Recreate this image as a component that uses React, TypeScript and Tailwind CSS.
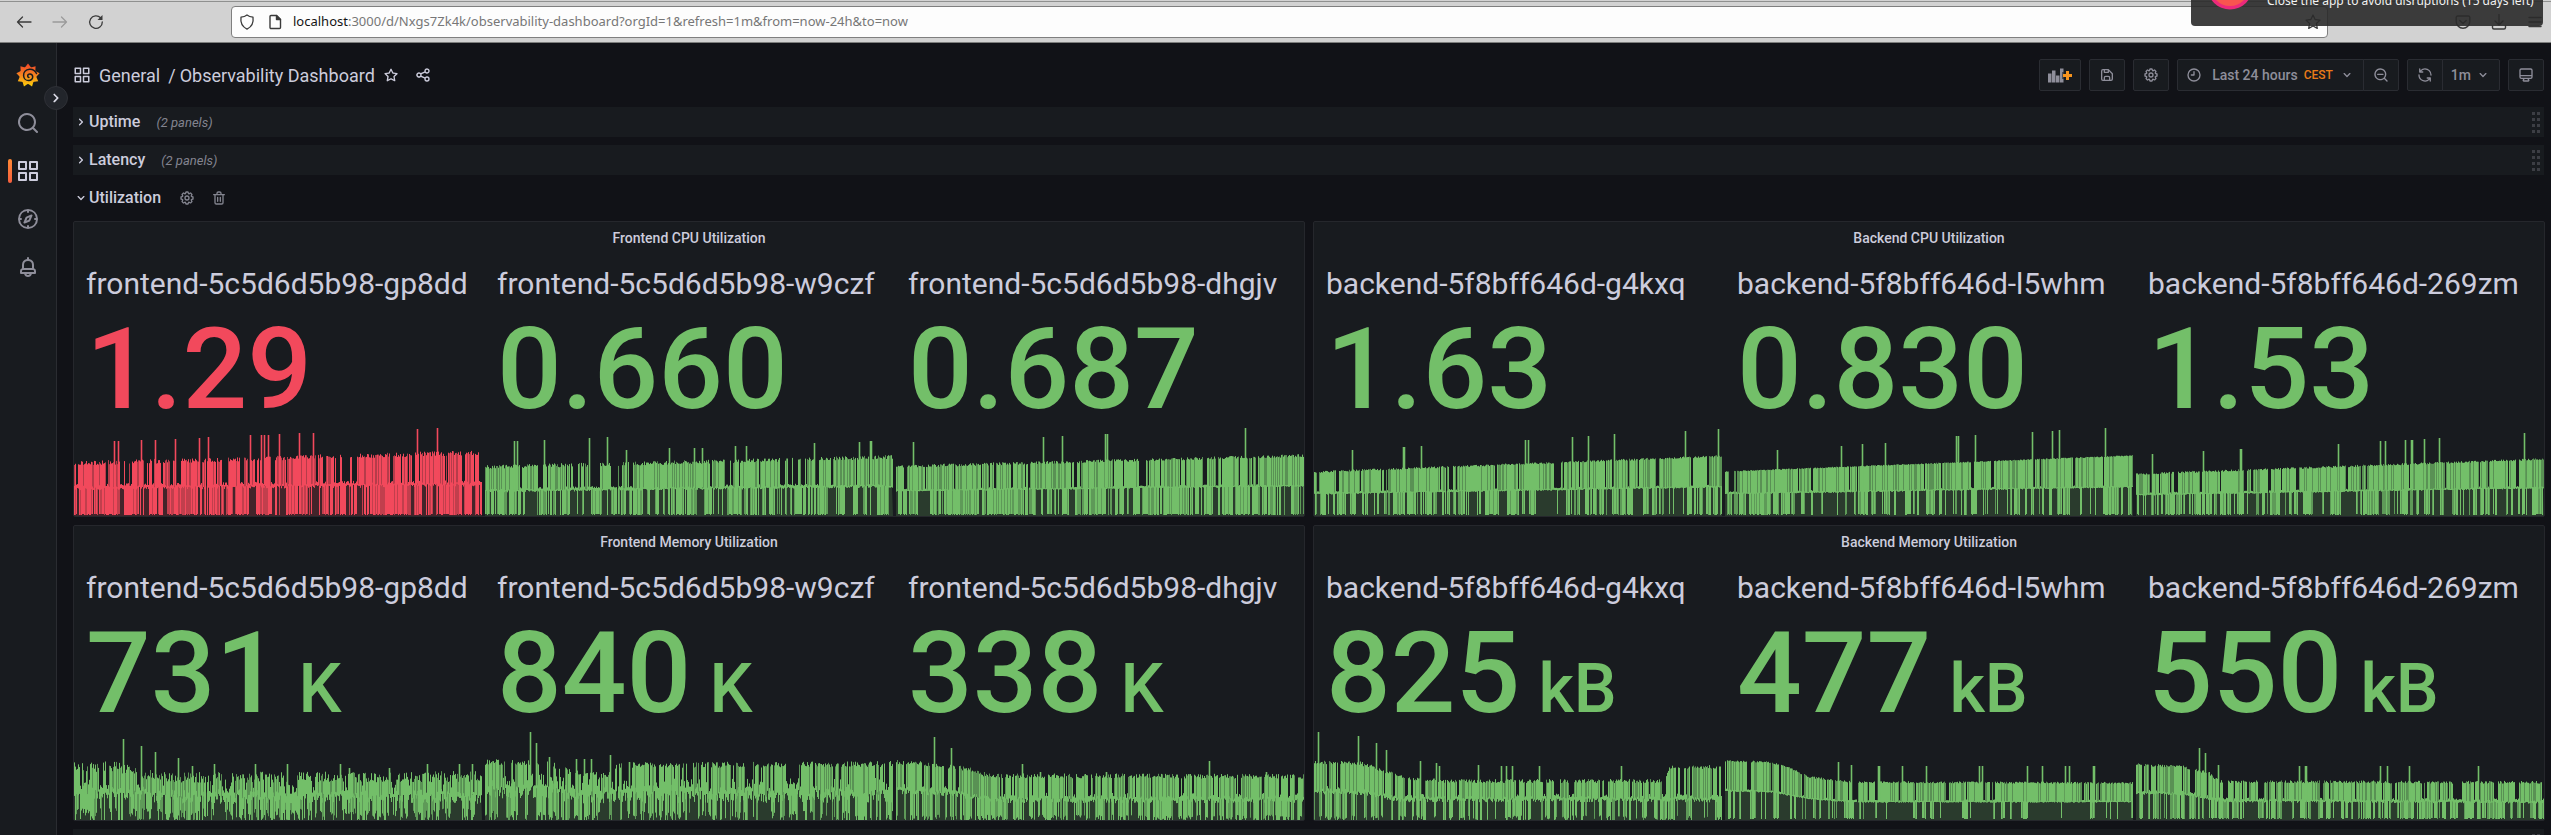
import type { ReactNode } from 'react';

const ICONS = {
  apps: 'M10,13H3a1,1,0,0,0-1,1v7a1,1,0,0,0,1,1h7a1,1,0,0,0,1-1V14A1,1,0,0,0,10,13ZM9,20H4V15H9ZM21,2H14a1,1,0,0,0-1,1v7a1,1,0,0,0,1,1h7a1,1,0,0,0,1-1V3A1,1,0,0,0,21,2ZM20,9H15V4h5Zm1,4H14a1,1,0,0,0-1,1v7a1,1,0,0,0,1,1h7a1,1,0,0,0,1-1V14A1,1,0,0,0,21,13Zm-1,7H15V15h5ZM10,2H3A1,1,0,0,0,2,3v7a1,1,0,0,0,1,1h7a1,1,0,0,0,1-1V3A1,1,0,0,0,10,2ZM9,9H4V4H9Z',
  search: 'M21.71,20.29,18,16.61A9,9,0,1,0,16.61,18l3.68,3.68a1,1,0,0,0,1.42,0A1,1,0,0,0,21.71,20.29ZM11,18a7,7,0,1,1,7-7A7,7,0,0,1,11,18Z',
  searchMinus: 'M21.71,20.29,18,16.61A9,9,0,1,0,16.61,18l3.68,3.68a1,1,0,0,0,1.42,0A1,1,0,0,0,21.71,20.29ZM11,18a7,7,0,1,1,7-7A7,7,0,0,1,11,18Zm4-8H7a1,1,0,0,0,0,2h8a1,1,0,0,0,0-2Z',
  compass: 'M12,2A10,10,0,1,0,22,12,10,10,0,0,0,12,2Zm1,17.93V19a1,1,0,0,0-2,0v.93A8,8,0,0,1,4.07,13H5a1,1,0,0,0,0-2H4.07A8,8,0,0,1,11,4.07V5a1,1,0,0,0,2,0V4.07A8,8,0,0,1,19.93,11H19a1,1,0,0,0,0,2h.93A8,8,0,0,1,13,19.93ZM15.14,7.55l-5,2.12a1,1,0,0,0-.52.52l-2.12,5a1,1,0,0,0,.21,1.1,1,1,0,0,0,.7.3.93.93,0,0,0,.4-.09l5-2.12a1,1,0,0,0,.52-.52l2.12-5a1,1,0,0,0-1.31-1.31Zm-2.49,5.1-2.28,1,1-2.28,2.28-1Z',
  bell: 'M18,13.18V10a6,6,0,0,0-5-5.91V3a1,1,0,0,0-2,0V4.09A6,6,0,0,0,6,10v3.18A3,3,0,0,0,4,16v2a1,1,0,0,0,1,1H8.14a4,4,0,0,0,7.72,0H19a1,1,0,0,0,1-1V16A3,3,0,0,0,18,13.18ZM8,10a4,4,0,0,1,8,0v3H8Zm4,10a2,2,0,0,1-1.72-1h3.44A2,2,0,0,1,12,20Zm6-3H6V16a1,1,0,0,1,1-1H17a1,1,0,0,1,1,1Z',
  star: 'M22,9.67A1,1,0,0,0,21.14,9l-5.69-.83L12.9,3a1,1,0,0,0-1.8,0L8.55,8.16,2.86,9a1,1,0,0,0-.81.68,1,1,0,0,0,.25,1l4.13,4-1,5.68A1,1,0,0,0,6.9,21.44L12,18.77l5.1,2.67a.93.93,0,0,0,.46.12,1,1,0,0,0,.59-.19,1,1,0,0,0,.4-1l-1-5.68,4.13-4A1,1,0,0,0,22,9.67Zm-6.15,4a1,1,0,0,0-.29.88l.72,4.2-3.76-2a1.06,1.06,0,0,0-.94,0l-3.76,2,.72-4.2a1,1,0,0,0-.29-.88l-3-3,4.21-.61a1,1,0,0,0,.76-.55L12,5.7l1.88,3.82a1,1,0,0,0,.76.55l4.21.61Z',
  share: 'M18,14a4,4,0,0,0-3.08,1.48l-5.1-2.35a3.64,3.64,0,0,0,0-2.26l5.1-2.35A4,4,0,1,0,14,6a4.17,4.17,0,0,0,.07.71L8.79,9.14a4,4,0,1,0,0,5.72l5.28,2.43A4.17,4.17,0,0,0,14,18a4,4,0,1,0,4-4ZM18,4a2,2,0,1,1-2,2A2,2,0,0,1,18,4ZM6,14a2,2,0,1,1,2-2A2,2,0,0,1,6,14Zm12,6a2,2,0,1,1,2-2A2,2,0,0,1,18,20Z',
  save: 'M20.71,9.29l-6-6a1,1,0,0,0-.32-.21A1.09,1.09,0,0,0,14,3H6A3,3,0,0,0,3,6V18a3,3,0,0,0,3,3H18a3,3,0,0,0,3-3V10A1,1,0,0,0,20.71,9.29ZM9,5h4V7H9Zm6,14H9V16a1,1,0,0,1,1-1h4a1,1,0,0,1,1,1Zm4-1a1,1,0,0,1-1,1H17V16a3,3,0,0,0-3-3H10a3,3,0,0,0-3,3v3H6a1,1,0,0,1-1-1V6A1,1,0,0,1,6,5H7V8A1,1,0,0,0,8,9h6a1,1,0,0,0,1-1V6.41l4,4Z',
  cog: 'M21.32,9.55l-1.89-.63.89-1.78A1,1,0,0,0,20.13,6L18,3.87a1,1,0,0,0-1.15-.19l-1.78.89-.63-1.89A1,1,0,0,0,13.5,2h-3a1,1,0,0,0-.95.68L8.92,4.57,7.14,3.68A1,1,0,0,0,6,3.87L3.87,6a1,1,0,0,0-.19,1.15l.89,1.78-1.89.63A1,1,0,0,0,2,10.5v3a1,1,0,0,0,.68.95l1.89.63-.89,1.78A1,1,0,0,0,3.87,18L6,20.13a1,1,0,0,0,1.15.19l1.78-.89.63,1.89a1,1,0,0,0,.95.68h3a1,1,0,0,0,.95-.68l.63-1.89,1.78.89A1,1,0,0,0,18,20.13L20.13,18a1,1,0,0,0,.19-1.15l-.89-1.78,1.89-.63A1,1,0,0,0,22,13.5v-3A1,1,0,0,0,21.32,9.55ZM20,12.78l-1.2.4A2,2,0,0,0,17.64,16l.57,1.14-1.1,1.1L16,17.64a2,2,0,0,0-2.79,1.16l-.4,1.2H11.22l-.4-1.2A2,2,0,0,0,8,17.64l-1.14.57-1.1-1.1L6.36,16A2,2,0,0,0,5.2,13.18L4,12.78V11.22l1.2-.4A2,2,0,0,0,6.36,8L5.79,6.89l1.1-1.1L8,6.36A2,2,0,0,0,10.82,5.2l.4-1.2h1.56l.4,1.2A2,2,0,0,0,16,6.36l1.14-.57,1.1,1.1L17.64,8a2,2,0,0,0,1.16,2.79l1.2.4ZM12,8a4,4,0,1,0,4,4A4,4,0,0,0,12,8Zm0,6a2,2,0,1,1,2-2A2,2,0,0,1,12,14Z',
  clock: 'M12,2A10,10,0,1,0,22,12,10,10,0,0,0,12,2Zm0,18a8,8,0,1,1,8-8A8,8,0,0,1,12,20ZM12,6a1,1,0,0,0-1,1v4H8a1,1,0,0,0,0,2h4a1,1,0,0,0,1-1V7A1,1,0,0,0,12,6Z',
  sync: 'M19.91,15.51H15.38a1,1,0,0,0,0,2h2.4A8,8,0,0,1,4,12a1,1,0,0,0-2,0,10,10,0,0,0,16.88,7.23V21a1,1,0,0,0,2,0V16.5A1,1,0,0,0,19.91,15.51ZM12,2A10,10,0,0,0,5.12,4.77V3a1,1,0,0,0-2,0V7.5a1,1,0,0,0,1,1h4.5a1,1,0,0,0,0-2H6.22A8,8,0,0,1,20,12a1,1,0,0,0,2,0A10,10,0,0,0,12,2Z',
  monitor: 'M19,2H5A3,3,0,0,0,2,5V15a3,3,0,0,0,3,3H7.64l-.58,1a2,2,0,0,0,0,2,2,2,0,0,0,1.75,1h6.46A2,2,0,0,0,17,21a2,2,0,0,0,0-2l-.59-1H19a3,3,0,0,0,3-3V5A3,3,0,0,0,19,2ZM8.77,20,10,18H14l1.2,2ZM20,15a1,1,0,0,1-1,1H5a1,1,0,0,1-1-1V14H20Zm0-3H4V5A1,1,0,0,1,5,4H19a1,1,0,0,1,1,1Z',
  trash: 'M10,18a1,1,0,0,0,1-1V11a1,1,0,0,0-2,0v6A1,1,0,0,0,10,18ZM20,6H16V5a3,3,0,0,0-3-3H11A3,3,0,0,0,8,5V6H4A1,1,0,0,0,4,8H5V19a3,3,0,0,0,3,3h8a3,3,0,0,0,3-3V8h1a1,1,0,0,0,0-2ZM10,5a1,1,0,0,1,1-1h2a1,1,0,0,1,1,1V6H10Zm7,14a1,1,0,0,1-1,1H8a1,1,0,0,1-1-1V8H17Zm-3-1a1,1,0,0,0,1-1V11a1,1,0,0,0-2,0v6A1,1,0,0,0,14,18Z',
  angleRight: 'M14.83,11.29,10.59,7.05a1,1,0,0,0-1.42,0,1,1,0,0,0,0,1.41L12.71,12,9.17,15.54a1,1,0,0,0,0,1.41,1,1,0,0,0,.71.29,1,1,0,0,0,.71-.29l4.24-4.24A1,1,0,0,0,14.83,11.29Z',
  angleDown: 'M17,9.17a1,1,0,0,0-1.41,0L12,12.71,8.46,9.17a1,1,0,0,0-1.41,0,1,1,0,0,0,0,1.42l4.24,4.24a1,1,0,0,0,1.42,0L17,10.59A1,1,0,0,0,17,9.17Z',
};

function Icon({ name, className = 'size-4' }: { name: keyof typeof ICONS; className?: string }) {
  return (
    <svg viewBox="0 0 24 24" fill="currentColor" aria-hidden="true" className={`shrink-0 ${className}`}>
      <path d={ICONS[name]} />
    </svg>
  );
}

/* ---------- sparkline ---------- */

type Stop = [x: number, y: number];

interface Series {
  seed: number;
  top: Stop[];
  mid: Stop[];
  topJitter: number;
  midJitter: number;
  up: number;
  low: number;
  ragged?: number;
  spikes: Stop[];
}

const CHART_W = 408;
const CHART_H = 89;

function random(seed: number) {
  let s = seed * 2654435761;
  return () => {
    s = (s + 0x6d2b79f5) | 0;
    let t = Math.imul(s ^ (s >>> 15), 1 | s);
    t = (t + Math.imul(t ^ (t >>> 7), 61 | t)) ^ t;
    return ((t ^ (t >>> 14)) >>> 0) / 4294967296;
  };
}

function at(stops: Stop[], x: number) {
  for (let i = 1; i < stops.length; i++) {
    const [x0, y0] = stops[i - 1];
    const [x1, y1] = stops[i];
    if (x <= x1) return y0 + ((y1 - y0) * (x - x0)) / (x1 - x0);
  }
  return stops[stops.length - 1][1];
}

function buildPaths(s: Series) {
  const rnd = random(s.seed);
  let strong = '';
  let soft = '';
  let peaks = '';
  let area = `M0 ${CHART_H}`;
  let up = true;
  let low = false;
  for (let x = 0; x < CHART_W; x++) {
    if (rnd() < 0.5) up = rnd() < s.up;
    if (rnd() < 0.55) low = rnd() < s.low;
    const mid = at(s.mid, x) + (rnd() - 0.5) * s.midJitter;
    const top = at(s.top, x) - rnd() * s.topJitter;
    const bottom = s.ragged ? Math.max(0, (rnd() - 0.35) * s.ragged) : rnd() < 0.5 ? 1 : 2;
    area += `L${x} ${(CHART_H - mid).toFixed(1)}`;
    if (x === 132) continue;
    const thick = 0.7 + s.midJitter / 2.5;
    const hi = up ? top : mid + thick;
    const lo = low ? bottom : mid - thick;
    const cx = x + 0.5;
    const upper = `M${cx} ${(CHART_H - mid + thick).toFixed(1)}V${(CHART_H - hi).toFixed(1)}`;
    const lower = `M${cx} ${(CHART_H - mid).toFixed(1)}V${(CHART_H - lo).toFixed(1)}`;
    if (!up || rnd() < 0.68) strong += upper;
    else soft += upper;
    if (rnd() < 0.66) strong += lower;
    else soft += lower;
  }
  for (const [x, y] of s.spikes) {
    peaks += `M${x + 0.5} ${(CHART_H - at(s.mid, x)).toFixed(1)}V${CHART_H - y}`;
  }
  area += `L${CHART_W} ${CHART_H}Z`;
  return { strong, soft, peaks, area };
}

function Sparkline({ series }: { series: Series }) {
  const { strong, soft, peaks, area } = buildPaths(series);
  return (
    <svg
      viewBox={`0 0 ${CHART_W} ${CHART_H}`}
      preserveAspectRatio="none"
      aria-hidden="true"
      className="block h-[89px] w-full"
    >
      <path d={area} fill="currentColor" opacity="0.2" />
      <path d={soft} stroke="currentColor" strokeWidth="1" opacity="0.72" fill="none" />
      <path d={strong} stroke="currentColor" strokeWidth="1" fill="none" />
      <path d={peaks} stroke="currentColor" strokeWidth="1.6" fill="none" />
    </svg>
  );
}

/* ---------- data ---------- */

interface Stat {
  label: string;
  value: string;
  unit?: string;
  alert?: boolean;
  series: Series;
}

const at54 = (xs: number[]): Stop[] => xs.map((x) => [x, 54]);

const PANELS: { title: string; stats: Stat[] }[] = [
  {
    title: 'Frontend CPU Utilization',
    stats: [
      {
        label: 'frontend-5c5d6d5b98-gp8dd',
        value: '1.29',
        alert: true,
        series: {
          seed: 11, top: [[0, 55], [408, 66]], mid: [[0, 29], [408, 33]], topJitter: 5, midJitter: 3, up: 0.8, low: 0.74,
          spikes: [[40, 75], [44, 75], [67, 76], [81, 76], [101, 77], [125, 78], [134, 79], [176, 81], [187, 81], [190, 81], [194, 81], [205, 82], [225, 83], [239, 83], [343, 87], [363, 88]],
        },
      },
      {
        label: 'frontend-5c5d6d5b98-w9czf',
        value: '0.660',
        series: {
          seed: 12, top: [[0, 51], [130, 54], [408, 61]], mid: [[0, 26], [408, 31]], topJitter: 4, midJitter: 2, up: 0.84, low: 0.64,
          spikes: [[29, 75], [32, 75], [59, 76], [104, 78], [122, 79], [141, 66], [184, 68], [209, 68], [217, 68], [250, 70], [261, 70], [329, 73], [374, 74], [385, 75], [386, 75]],
        },
      },
      {
        label: 'frontend-5c5d6d5b98-dhgjv',
        value: '0.687',
        series: {
          seed: 13, top: [[0, 51], [408, 62]], mid: [[0, 26], [408, 31]], topJitter: 3, midJitter: 1, up: 0.86, low: 0.75,
          spikes: [[17, 74], [147, 79], [166, 80], [209, 82], [211, 82], [349, 88]],
        },
      },
    ],
  },
  {
    title: 'Backend CPU Utilization',
    stats: [
      {
        label: 'backend-5f8bff646d-g4kxq',
        value: '1.63',
        series: {
          seed: 21, top: [[0, 45], [408, 61]], mid: [[0, 23], [408, 30]], topJitter: 2, midJitter: 1, up: 0.87, low: 0.56,
          spikes: [[38, 66], [89, 69], [90, 69], [107, 70], [211, 76], [214, 76], [258, 79], [274, 80], [300, 82], [371, 85], [404, 87]],
        },
      },
      {
        label: 'backend-5f8bff646d-l5whm',
        value: '0.830',
        series: {
          seed: 22, top: [[0, 45], [408, 61]], mid: [[0, 23], [408, 30]], topJitter: 1, midJitter: 1, up: 0.94, low: 0.5,
          spikes: [[52, 66], [116, 70], [137, 72], [160, 73], [231, 80], [233, 80], [250, 81], [307, 84], [327, 85], [334, 86], [380, 88]],
        },
      },
      {
        label: 'backend-5f8bff646d-269zm',
        value: '1.53',
        series: {
          seed: 23, top: [[0, 43], [408, 58]], mid: [[0, 22], [408, 29]], topJitter: 2, midJitter: 1, up: 0.9, low: 0.56,
          spikes: [[16, 62], [67, 65], [104, 67], [105, 67], [202, 72], [244, 75], [249, 75], [269, 76], [275, 76], [276, 76], [288, 77], [303, 78], [388, 83]],
        },
      },
    ],
  },
  {
    title: 'Frontend Memory Utilization',
    stats: [
      {
        label: 'frontend-5c5d6d5b98-gp8dd',
        value: '731',
        unit: 'K',
        series: {
          seed: 31, top: [[0, 60], [45, 58], [70, 52], [86, 48], [408, 49]], mid: [[0, 31], [70, 29], [86, 26], [408, 26]], topJitter: 11, midJitter: 10, up: 0.82, low: 0.74, ragged: 18,
          spikes: [[49, 81], [67, 74], [81, 68], [104, 62], [118, 54], [140, 56], [181, 56], [213, 56], [266, 56], [275, 52], [315, 52], [353, 56], [385, 56], [398, 56]],
        },
      },
      {
        label: 'frontend-5c5d6d5b98-w9czf',
        value: '840',
        unit: 'K',
        series: {
          seed: 32, top: [[0, 61], [60, 61], [85, 51], [120, 47], [133, 58], [408, 59]], mid: [[0, 34], [60, 34], [90, 28], [130, 29], [408, 30]], topJitter: 6, midJitter: 13, up: 0.68, low: 0.5, ragged: 14,
          spikes: [[45, 88], [51, 77], [64, 63], [91, 61], [99, 61], [106, 61], [125, 65], [144, 58]],
        },
      },
      {
        label: 'frontend-5c5d6d5b98-dhgjv',
        value: '338',
        unit: 'K',
        series: {
          seed: 33, top: [[0, 60], [22, 60], [80, 52], [90, 47], [408, 46]], mid: [[0, 31], [55, 29], [90, 22], [408, 22]], topJitter: 5, midJitter: 5, up: 0.82, low: 0.72, ragged: 8,
          spikes: [[38, 83], [55, 72], [126, 56], [144, 48], [210, 48], [313, 59], [370, 48]],
        },
      },
    ],
  },
  {
    title: 'Backend Memory Utilization',
    stats: [
      {
        label: 'backend-5f8bff646d-g4kxq',
        value: '825',
        unit: 'kB',
        series: {
          seed: 41, top: [[0, 60], [45, 59], [74, 50], [86, 45], [129, 41], [350, 41], [356, 55], [408, 55]], mid: [[0, 30], [50, 29], [84, 22], [408, 22]], topJitter: 4, midJitter: 4, up: 0.82, low: 0.48, ragged: 7,
          spikes: [[4, 88], [44, 84], [62, 77], [72, 70], [106, 59], [122, 57], [125, 54], [164, 55], [187, 54], [192, 54], [198, 54], [225, 54], [307, 54]],
        },
      },
      {
        label: 'backend-5f8bff646d-l5whm',
        value: '477',
        unit: 'kB',
        series: {
          seed: 42, top: [[0, 60], [42, 59], [63, 54], [83, 44], [126, 39], [408, 38]], mid: [[0, 30], [45, 29], [85, 22], [126, 19], [408, 19]], topJitter: 2, midJitter: 1, up: 0.89, low: 0.24,
          spikes: [[113, 58], [126, 55], [153, 54], [154, 54], ...at54([177, 201, 254, 257, 302, 317, 340, 344, 368, 369])],
        },
      },
      {
        label: 'backend-5f8bff646d-269zm',
        value: '550',
        unit: 'kB',
        series: {
          seed: 43, top: [[0, 57], [46, 55], [73, 48], [83, 40], [408, 39]], mid: [[0, 28], [50, 27], [85, 20], [408, 19]], topJitter: 3, midJitter: 2, up: 0.8, low: 0.55,
          spikes: [[63, 72], [69, 67], [82, 55], ...at54([163, 169, 170, 244, 251, 273, 342])],
        },
      },
    ],
  },
];

/* ---------- browser chrome ---------- */

function BrowserBar() {
  return (
    <div className="relative flex h-[43px] shrink-0 items-center border-b border-[#7d7e7d] bg-[#d2d2d2] pt-0.5 font-['Noto_Sans',sans-serif] text-[#3b3b3b]">
      <div className="absolute inset-x-0 top-px h-px bg-[#8f908f]" />
      <div className="flex w-[231px] shrink-0 items-center gap-5 pl-4">
        <button type="button" aria-label="Back">
          <svg viewBox="0 0 16 16" fill="none" stroke="currentColor" strokeWidth="1.3" strokeLinecap="round" strokeLinejoin="round" className="size-4">
            <path d="M15 8H1.5M6.5 3L1.5 8l5 5" />
          </svg>
        </button>
        <button type="button" aria-label="Forward" className="text-[#9b9b9b]">
          <svg viewBox="0 0 16 16" fill="none" stroke="currentColor" strokeWidth="1.3" strokeLinecap="round" strokeLinejoin="round" className="size-4">
            <path d="M1 8h13.500M9.500 3l5 5-5 5" />
          </svg>
        </button>
        <button type="button" aria-label="Reload">
          <svg viewBox="0 0 16 16" fill="none" stroke="currentColor" strokeWidth="1.3" strokeLinecap="round" strokeLinejoin="round" className="size-4">
            <path d="M12.600 3.800A6.300 6.300 0 1 0 14.300 8" />
            <path d="M14.500 1v5h-5z" fill="currentColor" stroke="none" />
          </svg>
        </button>
      </div>
      <div className="flex h-8 grow items-center rounded-[4px] border border-[#7f7f7f] bg-[#fdfdfd] pr-1.5 pl-[7px] text-[13px]">
        <svg viewBox="0 0 16 16" fill="none" stroke="currentColor" strokeWidth="1.300" strokeLinejoin="round" className="size-4 shrink-0">
          <path d="M8 1c1.900 1.500 3.900 2 6 2.200.700 5-1.200 9.600-6 12-4.800-2.400-6.700-7-6-12C4.100 3 6.100 2.500 8 1z" />
        </svg>
        <svg viewBox="0 0 16 16" fill="none" stroke="currentColor" strokeWidth="1.400" strokeLinejoin="round" className="ml-3 size-4 shrink-0">
          <path d="M4 1.500h5.500L13.500 5.500v8a1 1 0 0 1-1 1h-8.500a1 1 0 0 1-1-1v-11a1 1 0 0 1 1-1z" />
          <path d="M9.500 1.500v4h4z" fill="currentColor" />
        </svg>
        <div className="relative ml-2.5 h-full grow">
          <input
            aria-label="Address"
            readOnly
            defaultValue="localhost:3000/d/Nxgs7Zk4k/observability-dashboard?orgId=1&refresh=1m&from=now-24h&to=now"
            className="h-full w-full bg-transparent text-transparent outline-none"
          />
          <div aria-hidden="true" className="pointer-events-none absolute inset-0 flex items-center text-[#777777]">
            <span className="text-[#141414]">localhost</span>:3000/d/Nxgs7Zk4k/observability-dashboard?orgId=1&amp;refresh=1m&amp;from=now-24h&amp;to=now
          </div>
        </div>
        <button type="button" aria-label="Bookmark this page">
          <svg viewBox="0 0 16 16" fill="none" stroke="currentColor" strokeWidth="1.300" strokeLinejoin="round" className="size-4">
            <path d="M8 1l2.100 4.500 4.900.600-3.600 3.400.9 4.900L8 12l-4.300 2.400.900-4.900L1 6.100l4.900-.600z" />
          </svg>
        </button>
      </div>
      <div className="flex w-[223px] shrink-0 items-center justify-end gap-5 pr-2">
        <svg viewBox="0 0 16 16" fill="none" stroke="currentColor" strokeWidth="1.400" strokeLinecap="round" strokeLinejoin="round" className="size-4">
          <path d="M2.500 2h11a1.300 1.300 0 0 1 1.300 1.300v4.200a6.800 6.800 0 0 1-13.600 0V3.300A1.300 1.300 0 0 1 2.500 2zM4.800 6.500L8 9.500l3.200-3" />
        </svg>
        <svg viewBox="0 0 16 16" fill="none" stroke="currentColor" strokeWidth="1.400" strokeLinecap="round" strokeLinejoin="round" className="size-4">
          <path d="M8 .5v10M4 7l4 4 4-4M1.500 12v1.500a1.500 1.500 0 0 0 1.500 1.500h10a1.500 1.500 0 0 0 1.500-1.500V12" />
        </svg>
        <svg viewBox="0 0 16 16" stroke="currentColor" strokeWidth="1.400" strokeLinecap="round" className="size-4">
          <path d="M2 3.500h12M2 8h12M2 12.500h12" />
        </svg>
      </div>
      <Toast />
    </div>
  );
}

function Toast() {
  return (
    <div className="absolute top-0 right-2 z-10 flex h-[26px] w-[352px] overflow-hidden rounded-b-[4px] bg-[#2a2a2a]/90 pl-4">
      <svg viewBox="0 0 46 46" aria-hidden="true" className="-mt-9 size-[46px] shrink-0">
        <circle cx="23" cy="23" r="22.500" fill="#ec2a7b" />
        <ellipse cx="23" cy="21" rx="20" ry="21" fill="#f8554f" />
      </svg>
      <p className="-mt-2 ml-3.5 text-[12px] leading-[18px] whitespace-nowrap text-[#f2f2f2]">
        Close the app to avoid disruptions (15 days left)
      </p>
    </div>
  );
}

/* ---------- navigation ---------- */

function GrafanaLogo() {
  const teeth = Array.from({ length: 9 }, (_, i) => {
    const a = (i / 9) * Math.PI * 2 - Math.PI / 2;
    const p = (r: number, d: number) => `${(12 + r * Math.cos(a + d)).toFixed(2)} ${(12.3 + r * Math.sin(a + d)).toFixed(2)}`;
    return `${i ? 'L' : 'M'}${p(9, -0.26)}L${p(11.8, 0)}L${p(9, 0.26)}Q${p(8.2, 0.35)} ${p(9, 0.44)}`;
  }).join('');
  return (
    <svg viewBox="0 0 24 24" aria-hidden="true" className="size-6">
      <defs>
        <linearGradient id="flame" x1="0" y1="0" x2="0" y2="1">
          <stop offset="0" stopColor="#f0452a" />
          <stop offset="0.5" stopColor="#f58220" />
          <stop offset="1" stopColor="#fcd00a" />
        </linearGradient>
      </defs>
      <path d={`${teeth}Z`} fill="url(#flame)" />
      <path
        d="M20.500 10.500C19 7.300 16.300 6 13.500 6.200 9.700 6.500 7.400 9.400 7.600 12.700c.2 3 2.500 5 5.200 4.900 2.300-.1 4-1.800 3.900-3.900-.1-1.700-1.300-2.800-2.800-2.800-1.300 0-2.200.900-2.200 2 0 .8.500 1.400 1.200 1.500"
        fill="none"
        stroke="#181b1f"
        strokeWidth="1.500"
        strokeLinecap="round"
      />
    </svg>
  );
}

function NavItem({ label, active, children }: { label: string; active?: boolean; children: ReactNode }) {
  return (
    <a
      href="#"
      aria-label={label}
      className={`relative flex h-12 items-center justify-center ${active ? 'text-[#ccccdc]' : 'text-[#8e8e9a]'}`}
    >
      {active && <span className="absolute left-2 h-6 w-1 rounded-[2px] bg-linear-to-b from-[#ff8833] to-[#f55f3e]" />}
      {children}
    </a>
  );
}

function Sidebar() {
  return (
    <nav className="relative w-[57px] shrink-0 border-r border-[#2a2c31] bg-[#181b1f] pt-2">
      <NavItem label="Home"><GrafanaLogo /></NavItem>
      <NavItem label="Search"><Icon name="search" className="size-6" /></NavItem>
      <NavItem label="Dashboards" active><Icon name="apps" className="size-6" /></NavItem>
      <NavItem label="Explore"><Icon name="compass" className="size-6" /></NavItem>
      <NavItem label="Alerting"><Icon name="bell" className="size-6" /></NavItem>
      <button
        type="button"
        aria-label="Expand menu"
        className="absolute top-[43px] -right-3 z-10 flex size-6 items-center justify-center rounded-full border border-[#2e3036] bg-[#22252b] text-[#dcdce8]"
      >
        <Icon name="angleRight" className="size-5" />
      </button>
    </nav>
  );
}

/* ---------- dashboard ---------- */

const BTN = 'flex h-8 items-center justify-center border border-[#2a2c32] bg-[#181b1f] text-[#8e8e9a]';

function Toolbar() {
  return (
    <header className="flex h-16 items-center text-[18px] text-[#ccccdc]">
      <Icon name="apps" className="mr-2 size-[18px]" />
      <a href="#">General</a>
      <span className="mr-1 ml-2">/</span>
      <a href="#">Observability Dashboard</a>
      <button type="button" aria-label="Mark as favorite" className="ml-2"><Icon name="star" /></button>
      <button type="button" aria-label="Share dashboard" className="ml-4"><Icon name="share" /></button>
      <div className="ml-auto flex gap-2 pr-px text-[14px] font-medium">
        <button type="button" aria-label="Add panel" className={`${BTN} w-[42px] rounded-[2px]`}>
          <svg viewBox="0 0 24 16" className="h-4 w-6">
            <path d="M0 6h3.500v9H0zM4 3h3.500v12H4zM8 8h3.500v7H8zM12 1h3.500v14H12z" fill="#8e8e9a" transform="translate(0 .5)" />
            <path d="M14 5h9v7h-9z" fill="#181b1f" opacity=".55" />
            <path d="M18 4h3v3h3v3h-3v3h-3v-3h-3V7h3z" fill="#f7941e" />
          </svg>
        </button>
        <button type="button" aria-label="Save dashboard" className={`${BTN} w-9 rounded-[2px]`}><Icon name="save" /></button>
        <button type="button" aria-label="Dashboard settings" className={`${BTN} w-9 rounded-[2px]`}><Icon name="cog" /></button>
        <div className="flex">
          <button type="button" className={`${BTN} rounded-l-[2px] px-2`}>
            <Icon name="clock" />
            <span className="ml-2.5">Last 24 hours</span>
            <span className="mx-1.5 text-[12px] text-[#eb7b18]">CEST</span>
            <Icon name="angleDown" />
          </button>
          <button type="button" aria-label="Zoom out" className={`${BTN} -ml-px w-9 rounded-r-[2px]`}><Icon name="searchMinus" /></button>
        </div>
        <div className="flex">
          <button type="button" aria-label="Refresh" className={`${BTN} w-9 rounded-l-[2px]`}><Icon name="sync" /></button>
          <button type="button" className={`${BTN} -ml-px gap-1 rounded-r-[2px] px-2`}>
            1m
            <Icon name="angleDown" />
          </button>
        </div>
        <button type="button" aria-label="Cycle view mode" className={`${BTN} w-9 rounded-[2px]`}><Icon name="monitor" /></button>
      </div>
    </header>
  );
}

function DragHandle() {
  return (
    <svg viewBox="0 0 8 21" fill="#3c3e44" aria-hidden="true" className="mr-1 ml-auto h-[21px] w-2">
      {[0, 6, 12, 18].map((y) => (
        <path key={y} d={`M0 ${y}h3v3h-3zM5 ${y}h3v3h-3z`} />
      ))}
    </svg>
  );
}

function CollapsedRow({ title, count }: { title?: string; count?: string }) {
  return (
    <section className="mr-px flex h-[30px] shrink-0 items-center bg-[#181b1f]">
      {title && (
        <button type="button" className="flex items-center text-[16px] font-medium text-[#ccccdc]">
          <Icon name="angleRight" />
          {title}
          <span className="ml-4 pt-0.5 text-[13px] font-normal text-[#83848f] italic">{count}</span>
        </button>
      )}
      <DragHandle />
    </section>
  );
}

function StatItem({ stat }: { stat: Stat }) {
  return (
    <div className={`flex min-w-0 flex-col justify-between pt-3 ${stat.alert ? 'text-[#f2495c]' : 'text-[#73bf69]'}`}>
      <div className="px-3 whitespace-nowrap">
        <div className="text-[30px] leading-9 text-[#ccccdc]">{stat.label}</div>
        <div className="mt-2.5 text-[114px] leading-none font-medium">
          {stat.value}
          {stat.unit && <span className="ml-[18px] text-[68px] leading-none">{stat.unit}</span>}
        </div>
      </div>
      <Sparkline series={stat.series} />
    </div>
  );
}

function Panel({ title, stats }: { title: string; stats: Stat[] }) {
  return (
    <section className="flex h-[296px] min-w-0 flex-col overflow-hidden rounded-[2px] border border-[#25272c] bg-[#181b1f]">
      <h2 className="h-8 text-center text-[14px] leading-8 font-medium text-[#ccccdc]">{title}</h2>
      <div className="grid grow grid-cols-3 gap-[3px]">
        {stats.map((stat) => (
          <StatItem key={stat.label} stat={stat} />
        ))}
      </div>
    </section>
  );
}

export default function App() {
  return (
    <div className="flex h-screen flex-col overflow-hidden bg-[#111217] font-[Roboto,sans-serif]">
      <BrowserBar />
      <div className="flex min-h-0 grow">
        <Sidebar />
        <main className="min-w-0 grow overflow-hidden pr-1.5 pl-4">
          <Toolbar />
          <div className="flex flex-col gap-2">
            <CollapsedRow title="Uptime" count="(2 panels)" />
            <CollapsedRow title="Latency" count="(2 panels)" />
            <section className="flex h-[30px] items-center text-[#83848f]">
              <button type="button" className="flex items-center text-[16px] font-medium text-[#ccccdc]">
                <Icon name="angleDown" />
                Utilization
              </button>
              <button type="button" aria-label="Row options" className="ml-[18px]"><Icon name="cog" /></button>
              <button type="button" aria-label="Delete row" className="ml-4"><Icon name="trash" /></button>
            </section>
            <div className="grid grid-cols-2 gap-2">
              {PANELS.map((panel) => (
                <Panel key={panel.title} {...panel} />
              ))}
            </div>
            <CollapsedRow />
          </div>
        </main>
      </div>
    </div>
  );
}
